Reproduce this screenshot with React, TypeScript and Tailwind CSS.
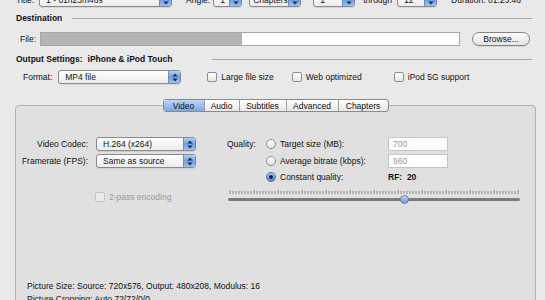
import React from "react";

function Arrows() {
  return (
    <svg width="6" height="9" viewBox="0 0 6 9">
      <polygon points="3,0.5 5.6,3.6 0.4,3.6" fill="#1d2b4d" />
      <polygon points="0.4,5.4 5.6,5.4 3,8.5" fill="#1d2b4d" />
    </svg>
  );
}

function Popup({ w, text, tight }: { w: string; text: string; tight?: boolean }) {
  return (
    <div
      className={`flex h-[14px] items-stretch overflow-hidden rounded-[3px] border border-[#8a8a8a] bg-linear-to-b from-white to-[#ececec] shadow-[0_1px_0_rgba(0,0,0,0.08)] ${w}`}
    >
      <span className={tight ? "flex flex-1 items-center overflow-hidden whitespace-nowrap pl-[3px]" : "flex flex-1 items-center overflow-hidden whitespace-nowrap pl-[6px]"}>{text}</span>
      <span className="flex w-[12px] items-center justify-center border-l border-[#6b8fc2] bg-linear-to-b from-[#b3d2f6] via-[#6a9fe4] to-[#9cc1f0]">
        <Arrows />
      </span>
    </div>
  );
}

function Check({ label, disabled }: { label: string; disabled?: boolean }) {
  return (
    <div className="flex items-center">
      <span
        className={
          disabled
            ? "h-[10px] w-[10px] rounded-[2px] border border-[#c2c2c2] bg-[#ececec]"
            : "h-[10px] w-[10px] rounded-[2px] border border-[#8e8e8e] bg-linear-to-b from-white to-[#e6e6e6]"
        }
      />
      <span className={disabled ? "ml-[4px] text-[#9a9a9a]" : "ml-[4px]"}>{label}</span>
    </div>
  );
}

function Radio({ on }: { on?: boolean }) {
  return on ? (
    <span className="flex h-[10px] w-[10px] items-center justify-center rounded-full border border-[#4e6f9e] bg-linear-to-b from-[#a8c9f3] to-[#4f8ade]">
      <span className="h-[4px] w-[4px] rounded-full bg-[#1a2340]" />
    </span>
  ) : (
    <span className="h-[10px] w-[10px] rounded-full border border-[#8e8e8e] bg-linear-to-b from-white to-[#e4e4e4]" />
  );
}

function Ticks() {
  const ticks = [];
  for (let i = 0; i <= 96; i++) {
    const x = 2 + i * 3;
    ticks.push(<line key={i} x1={x} y1={i % 8 === 0 ? 0 : 1} x2={x} y2={4} stroke="#8c8c8c" strokeWidth="1" />);
  }
  return (
    <svg width="292" height="4" viewBox="0 0 292 4" className="block">
      {ticks}
    </svg>
  );
}

export default function App() {
  return (
    <div className="relative h-[300px] w-[545px] overflow-hidden bg-[#e9e9e9] font-['Liberation_Sans',Arial,sans-serif] text-[8.5px] leading-[10px] text-[#111]">
      {/* top row */}
      <div className="-mt-[7px] flex h-[14px] items-center pl-[16px]">
        <span className="mr-[5px]">Title:</span>
        <Popup w="w-[133px]" text="1 - 01h23m46s" />
        <span className="ml-[14px] mr-[3px]">Angle:</span>
        <Popup w="w-[29px]" text="1" />
        <div className="ml-[7px]">
          <Popup w="w-[52px]" text="Chapters" tight />
        </div>
        <div className="ml-[12px]">
          <Popup w="w-[42px]" text="1" />
        </div>
        <span className="ml-[8px] mr-[5px]">through</span>
        <Popup w="w-[40px]" text="12" />
        <span className="ml-[14px]">Duration: 01:23:46</span>
      </div>

      {/* Destination */}
      <div className="mt-[6px] flex h-[10px] items-center pl-[16px]">
        <span className="font-bold">Destination</span>
        <span className="ml-[10px] mr-[13px] h-px flex-1 bg-[#a9a9a9]" />
      </div>

      <div className="mt-[9px] flex h-[14px] items-center pl-[20px]">
        <span className="mr-[4px]">File:</span>
        <div className="flex h-[14px] w-[420px] border border-[#a8a8a8] bg-white">
          <div className="h-full w-[201px] bg-[#b4b4b4]" />
        </div>
        <div className="ml-[12px] flex h-[14px] w-[58px] items-center justify-center rounded-full border border-[#858585] bg-linear-to-b from-white to-[#e3e3e3] shadow-[0_1px_0_rgba(0,0,0,0.1)]">
          Browse...
        </div>
      </div>

      {/* Output settings */}
      <div className="mt-[8px] flex h-[10px] items-center pl-[16px]">
        <span className="font-bold">Output Settings:</span>
        <span className="ml-[5px] font-bold">iPhone &amp; iPod Touch</span>
        <span className="ml-[40px] mr-[13px] h-px flex-1 bg-[#a9a9a9]" />
      </div>

      <div className="mt-[6px] flex h-[14px] items-center pl-[23px]">
        <span className="mr-[6px]">Format:</span>
        <Popup w="w-[123px]" text="MP4 file" />
        <div className="ml-[26px]">
          <Check label="Large file size" />
        </div>
        <div className="ml-[18px]">
          <Check label="Web optimized" />
        </div>
        <div className="ml-[32px]">
          <Check label="iPod 5G support" />
        </div>
      </div>

      {/* Tabs */}
      <div className="relative z-10 ml-[15px] mt-[15px] flex w-[521px] justify-center">
        <div className="flex h-[13px] overflow-hidden rounded-[3px] border border-[#8a8a8a] bg-linear-to-b from-white to-[#e8e8e8]">
          <span className="flex w-[40px] items-center justify-center bg-linear-to-b from-[#bcd8f7] to-[#77a8e8]">Video</span>
          <span className="flex w-[35px] items-center justify-center border-l border-[#a0a0a0]">Audio</span>
          <span className="flex w-[47px] items-center justify-center border-l border-[#a0a0a0]">Subtitles</span>
          <span className="flex w-[52px] items-center justify-center border-l border-[#a0a0a0]">Advanced</span>
          <span className="flex w-[50px] items-center justify-center border-l border-[#a0a0a0]">Chapters</span>
        </div>
      </div>

      {/* Panel */}
      <div className="ml-[15px] -mt-[7px] h-[220px] w-[521px] rounded-[4px] border border-[#b2b2b2] bg-[#e0e0e0] pt-[31px]">
        <div className="flex h-[143px] items-start">
          {/* left */}
          <div className="flex w-[211px] flex-col">
            <div className="flex h-[14px] items-center">
              <span className="w-[72px] text-right">Video Codec:</span>
              <div className="ml-[8px]">
                <Popup w="w-[100px]" text="H.264 (x264)" />
              </div>
            </div>
            <div className="mt-[3px] flex h-[14px] items-center">
              <span className="w-[72px] text-right">Framerate (FPS):</span>
              <div className="ml-[8px]">
                <Popup w="w-[100px]" text="Same as source" />
              </div>
            </div>
            <div className="ml-[79px] mt-[24px] flex h-[10px] items-center">
              <Check label="2-pass encoding" disabled />
            </div>
          </div>

          {/* right */}
          <div className="flex flex-col">
            <div className="flex h-[14px] items-center">
              <span className="w-[39px]">Quality:</span>
              <Radio />
              <span className="ml-[4px] w-[108px]">Target size (MB):</span>
              <div className="flex h-[14px] w-[60px] items-center border border-[#c4c4c4] bg-white pl-[4px] text-[#9a9a9a]">700</div>
            </div>
            <div className="mt-[3px] flex h-[14px] items-center">
              <span className="w-[39px]" />
              <Radio />
              <span className="ml-[4px] w-[108px]">Average bitrate (kbps):</span>
              <div className="flex h-[14px] w-[60px] items-center border border-[#c4c4c4] bg-white pl-[4px] text-[#9a9a9a]">960</div>
            </div>
            <div className="mt-[3px] flex h-[12px] items-center">
              <span className="w-[39px]" />
              <Radio on />
              <span className="ml-[4px] w-[108px]">Constant quality:</span>
              <span className="font-bold">RF:&nbsp; 20</span>
            </div>
            <div className="relative ml-[1px] mt-[7px] w-[292px]">
              <Ticks />
              <div className="mt-[4px] h-[3px] w-[292px] rounded-full bg-[#7a7a7a]" />
              <span className="absolute left-[172px] top-[5px] h-[9px] w-[9px] rounded-full border border-[#6b7f9c] bg-linear-to-b from-[#c3d9f5] to-[#6f9bd6]" />
            </div>
          </div>
        </div>
        <div className="pl-[11px] leading-[13px]">
          <div>Picture Size: Source: 720x576, Output: 480x208, Modulus: 16</div>
          <div>Picture Cropping: Auto 72/72/0/0</div>
        </div>
      </div>
    </div>
  );
}
